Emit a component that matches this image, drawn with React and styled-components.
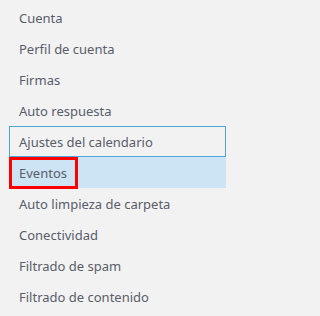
import React from 'react';
import styled, { createGlobalStyle } from 'styled-components';

const GlobalStyle = createGlobalStyle`
  html, body {
    margin: 0;
    padding: 0;
    background: #f2f2f2;
  }
`;

const Page = styled.div`
  width: 238px;
  height: 316px;
  background: #f2f2f2;
  padding: 2px 12px 0 9px;
  box-sizing: border-box;
  font-family: "Noto Sans", "Open Sans", sans-serif;
`;

const List = styled.ul`
  list-style: none;
  margin: 0;
  padding: 0;
  display: flex;
  flex-direction: column;
`;

const Item = styled.li`
  position: relative;
  height: 31px;
  box-sizing: border-box;
  display: flex;
  align-items: center;
  padding-left: 9px;
  border: 1px solid ${props => props.focused ? '#4ea6dc' : 'transparent'};
  background: ${props => props.selected ? '#cce4f3' : 'transparent'};
  color: #595d6a;
  font-size: 13px;
  white-space: nowrap;
`;

const Marker = styled.span`
  position: absolute;
  left: -1px;
  top: -1px;
  width: 69px;
  height: 32px;
  box-sizing: border-box;
  border: 3px solid #f00;
`;

const items = [
  'Cuenta',
  'Perfil de cuenta',
  'Firmas',
  'Auto respuesta',
  'Ajustes del calendario',
  'Eventos',
  'Auto limpieza de carpeta',
  'Conectividad',
  'Filtrado de spam',
  'Filtrado de contenido',
];

export default function App() {
  return (
    <>
      <GlobalStyle />
      <Page>
        <List>
          {items.map(label => (
            <Item
              key={label}
              focused={label === 'Ajustes del calendario'}
              selected={label === 'Eventos'}
            >
              {label}
              {label === 'Eventos' && <Marker />}
            </Item>
          ))}
        </List>
      </Page>
    </>
  );
}
